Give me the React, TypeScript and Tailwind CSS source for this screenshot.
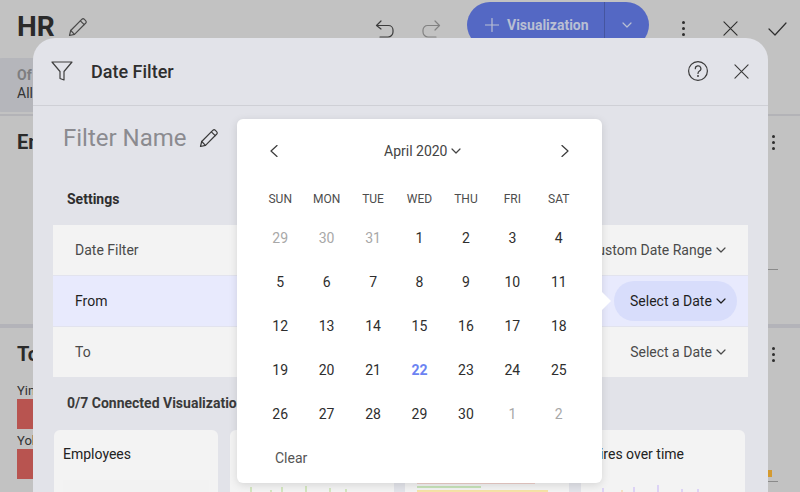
import React from "react";

const S = ({ w, h, vb, children, className = "", sw = 1.2 }: any) => (
  <svg width={w} height={h} viewBox={vb} fill="none" stroke="currentColor" strokeWidth={sw} strokeLinecap="round" strokeLinejoin="round" className={`block shrink-0 ${className}`}>
    {children}
  </svg>
);
const Chevron = ({ className = "" }: any) => (
  <S w={10} h={6} vb="0 0 10 6" className={className}><path d="M1 1l4 4 4-4" /></S>
);
const Pencil = ({ s = 20, className = "" }: any) => (
  <S w={s} h={s} vb="0 0 20 20" className={className}>
    <path d="M1.5 18.5l1.2-5L14 2.2a1.6 1.6 0 0 1 2.2 0l1.6 1.6a1.6 1.6 0 0 1 0 2.2L6.5 17.3z" />
    <path d="M12.4 3.8l3.8 3.8M2.7 13.5l3.8 3.8" />
  </S>
);
const Close = ({ s = 16, className = "" }: any) => (
  <S w={s} h={s} vb="0 0 16 16" className={className}><path d="M1 1l14 14M15 1L1 15" /></S>
);
const Dots = ({ className = "" }: any) => (
  <div className={`flex flex-col gap-[3px] ${className}`}>
    <span className="w-[3px] h-[3px] rounded-full bg-[#2e2e2e]" />
    <span className="w-[3px] h-[3px] rounded-full bg-[#2e2e2e]" />
    <span className="w-[3px] h-[3px] rounded-full bg-[#2e2e2e]" />
  </div>
);

const weeks = [
  [29, 30, 31, 1, 2, 3, 4],
  [5, 6, 7, 8, 9, 10, 11],
  [12, 13, 14, 15, 16, 17, 18],
  [19, 20, 21, 22, 23, 24, 25],
  [26, 27, 28, 29, 30, 1, 2],
];
const days = ["SUN", "MON", "TUE", "WED", "THU", "FRI", "SAT"];

const Ticks = ({ items, color, special }: { items: [number, number][]; color: string; special?: number }) => (
  <div className="flex items-end h-full">
    {items.map(([gap, height], i) => (
      <span key={i} className="w-[2px] shrink-0" style={{ marginLeft: gap, height, backgroundColor: i === special ? "#f3dfc0" : color }} />
    ))}
  </div>
);

export default function App() {
  return (
    <div className="relative w-[800px] h-[492px] overflow-hidden bg-[#c2c2c2] text-[#2b2b2b] font-['Roboto',sans-serif]">
      {/* Page behind the dialog */}
      <header className="h-[58px] flex items-start">
        <div className="flex items-center pl-[17px] pt-[9px]">
          <span className="text-[28px] leading-[36px] font-bold text-[#2a2a2a]">HR</span>
          <Pencil s={20} className="ml-[13px] text-[#4a4a4a]" />
        </div>
        <div className="ml-auto flex items-center pt-[7px] pr-[13px] h-[50px]">
          <S w={20} h={20} vb="0 0 20 20" className="text-[#3c3c3c]">
            <path d="M6 2L1.5 6.5 6 10" />
            <path d="M1.5 6.5h12a4.5 4.5 0 0 1 4.5 4.5v2a5 5 0 0 1-5 5H5" />
          </S>
          <S w={20} h={20} vb="0 0 20 20" className="ml-[26px] text-[#828282]">
            <path d="M14 2l4.500 4.500L14 11" />
            <path d="M18.500 6.500h-12A4.500 4.500 0 0 0 2 11v2a5 5 0 0 0 5 5h8" />
          </S>
          <div className="ml-[26px] w-[182px] h-[46px] -mt-[7px] rounded-[23px] bg-[#5468c4] flex items-center text-[#b9bfd3]">
            <S w={14} h={14} vb="0 0 14 14" className="ml-[18px]"><path d="M7 0.5v13M0.5 7h13" /></S>
            <span className="ml-[8px] text-[14px] font-bold">Visualization</span>
            <div className="ml-auto w-[45px] h-full border-l border-[#45559f] flex items-center justify-center">
              <Chevron />
            </div>
          </div>
          <Dots className="ml-[33px]" />
          <Close s={15} className="ml-[38px] text-[#2e2e2e]" />
          <S w={19} h={14} vb="0 0 19 14" className="ml-[30px] text-[#2e2e2e]"><path d="M1 7l6 6L18 1" /></S>
        </div>
      </header>

      <div className="w-[110px] h-[54px] -ml-[6px] rounded-[8px] bg-[#b5b6bb] pl-[23px] pt-[8px] text-[14px] leading-[18px]">
        <div className="font-bold text-[#7e7e80]">Of</div>
        <div className="text-[#333]">All</div>
      </div>
      <div className="mt-[2px] h-[2px] bg-[#b3b3b7]" />

      <section className="h-[208px] relative">
        <div className="pl-[17px] pt-[14px] pr-[25px] flex items-center justify-between">
          <span className="text-[20px] leading-[24px] font-bold text-[#2a2a2a]">Em</span>
          <Dots />
        </div>
        <div className="absolute right-[22px] top-[153px] w-[10px] h-px bg-[#8a8a8a]" />
      </section>
      <div className="h-[4px] bg-[#b3b3b9]" />

      <section className="relative pl-[17px] pt-[14px] pr-[25px]">
        <div className="flex items-center justify-between">
          <span className="text-[20px] leading-[24px] font-bold text-[#2a2a2a]">To</span>
          <Dots />
        </div>
        <div className="mt-[17px] text-[13px] leading-[16px] text-[#333]">Yin</div>
        <div className="w-[30px] h-[30px] bg-[#b85450]" />
        <div className="mt-[4px] text-[13px] leading-[16px] text-[#333]">Yol</div>
        <div className="w-[30px] h-[30px] bg-[#b85450]" />
        <div className="absolute right-[28px] top-[142px] w-[4px] h-[7px] bg-[#d49a30]" />
        <div className="absolute right-[22px] top-[153px] w-[10px] h-px bg-[#8a8a8a]" />
      </section>

      {/* Dialog */}
      <div className="absolute left-[33px] top-[38px] w-[735px] h-[470px] rounded-t-[22px] bg-[#e2e3e9]">
        <div className="h-[68px] flex items-center border-b border-[#cfd0d6] pl-[18px] pr-[19px] pb-[1px]">
          <S w={22} h={20} vb="0 0 22 20" className="text-[#3f3f3f]">
            <path d="M1 1h20l-8 9.500V19l-4-1.500v-7z" />
          </S>
          <span className="ml-[18px] text-[18px] font-medium text-[#2e2e2e]">Date Filter</span>
          <S w={20} h={20} vb="0 0 20 20" className="ml-auto text-[#3a3a3a]">
            <circle cx="10" cy="10" r="9.400" />
            <path d="M7.300 7.700a2.800 2.800 0 1 1 4.200 2.400c-1 .6-1.500 1.200-1.500 2.400" />
            <circle cx="10" cy="15" r=".4" />
          </S>
          <Close s={15} className="ml-[26px] text-[#3a3a3a]" />
        </div>

        <div className="pl-[30px] pt-[14px] pb-[2px] flex items-center h-[52px]">
          <span className="text-[24px] leading-[34px] text-[#8b8b90]">Filter Name</span>
          <Pencil s={20} className="ml-[12px] text-[#3a3a3a]" />
        </div>

        <div className="pl-[34px] mt-[32px] text-[14px] leading-[18px] font-bold text-[#2e2e2e]">Settings</div>

        <div className="mx-[20px] mt-[17px] text-[14px]">
          <div className="h-[50px] bg-[#f3f3f3] flex items-center pl-[22px] pr-[22px] text-[#4a4a4a]">
            <span>Date Filter</span>
            <span className="ml-auto flex items-center gap-[4px]">Custom Date Range<Chevron /></span>
          </div>
          <div className="h-[52px] bg-[#e8eafd] border-y border-[#e2e3ee] flex items-center pl-[22px] pr-[11px] text-[#1f1f1f]">
            <span>From</span>
            <span className="ml-auto h-[40px] w-[123px] rounded-[20px] bg-[#d8ddfb] flex items-center pl-[16px] gap-[4px]">Select a Date<Chevron /></span>
          </div>
          <div className="h-[50px] bg-[#f3f3f3] flex items-center pl-[22px] pr-[22px] text-[#4a4a4a]">
            <span>To</span>
            <span className="ml-auto flex items-center gap-[4px]">Select a Date<Chevron /></span>
          </div>
        </div>

        <div className="pl-[34px] mt-[17px] text-[14px] leading-[18px] font-bold text-[#3a3a3a]">0/7 Connected Visualizations</div>

        <div className="ml-[21px] mt-[18px] flex gap-[11.67px] text-[14px] text-[#222]">
          <div className="w-[164px] h-[90px] rounded-[6px] bg-[#f3f3f3] pl-[9px] pt-[15px] leading-[18px]">
            Employees
            <div className="mt-[17px] w-[146px] h-[30px] bg-[#f2f2f2]" />
          </div>
          <div className="w-[164px] h-[90px] rounded-[6px] bg-[#f3f3f3] pt-[52px]">
            <div className="h-[10px]">
              <Ticks items={[[20, 5], [18, 2], [9, 5], [22, 6], [22, 4], [14, 3]]} color="#d3e6bf" />
            </div>
          </div>
          <div className="w-[164px] h-[90px] rounded-[6px] bg-[#f3f3f3] pl-[12px] pt-[53px]">
            <div className="w-[118px] h-[1px] bg-[#eccfc9]" />
            <div className="w-[64px] h-[2px] mt-[2px] bg-[#c6e2b8]" />
            <div className="w-[131px] h-[3px] mt-[2px] bg-[#f6e3a6]" />
          </div>
          <div className="w-[164px] h-[90px] rounded-[6px] bg-[#f3f3f3] pl-[9px] pt-[15px] leading-[18px]">
            <div>Hires over time</div>
            <div className="h-[10px] mt-[19px] -ml-[9px]">
              <Ticks items={[[21, 4], [17, 2], [10, 5], [22, 7], [22, 3], [14, 3]]} color="#dcd3f5" special={1} />
            </div>
          </div>
        </div>
      </div>

      {/* Date picker popover */}
      <div className="absolute left-[237px] top-[119px] w-[365px] h-[364px] rounded-[6px] bg-white shadow-[0_2px_8px_rgba(0,0,0,0.12)]">
        <div className="absolute left-[365px] top-[173px] w-0 h-0 border-y-[9px] border-y-transparent border-l-[9px] border-l-white" />
        <div className="h-[64px] flex items-center pl-[33px] pr-[33px]">
          <S w={8} h={12} vb="0 0 8 12" className="text-[#3a3a3a]"><path d="M7 0.500L1 6l6 5.500" /></S>
          <span className="ml-[106px] flex items-center gap-[3px] text-[14px] text-[#444]">April 2020<Chevron /></span>
          <S w={8} h={12} vb="0 0 8 12" className="ml-auto text-[#3a3a3a]"><path d="M1 0.500L7 6l-6 5.500" /></S>
        </div>
        <div className="ml-[20px] w-[325px] grid grid-cols-7 text-center">
          {days.map((d) => (
            <div key={d} className="h-[33px] leading-[32px] text-[12px] text-[#4d4d4d]">{d}</div>
          ))}
          {weeks.map((w, wi) =>
            w.map((n, di) => {
              const muted = (wi === 0 && n > 20) || (wi === 4 && n < 3);
              const today = wi === 3 && n === 22;
              return (
                <div
                  key={`${wi}-${di}`}
                  className={`h-[44px] leading-[44px] text-[14px] ${muted ? "text-[#a8a8a8]" : today ? "text-[#6b83f2] font-bold" : "text-[#2e2e2e]"}`}
                >
                  {n}
                </div>
              );
            })
          )}
        </div>
        <div className="pl-[38px] mt-[12px] text-[14px] leading-[20px] text-[#555]">Clear</div>
      </div>
    </div>
  );
}
